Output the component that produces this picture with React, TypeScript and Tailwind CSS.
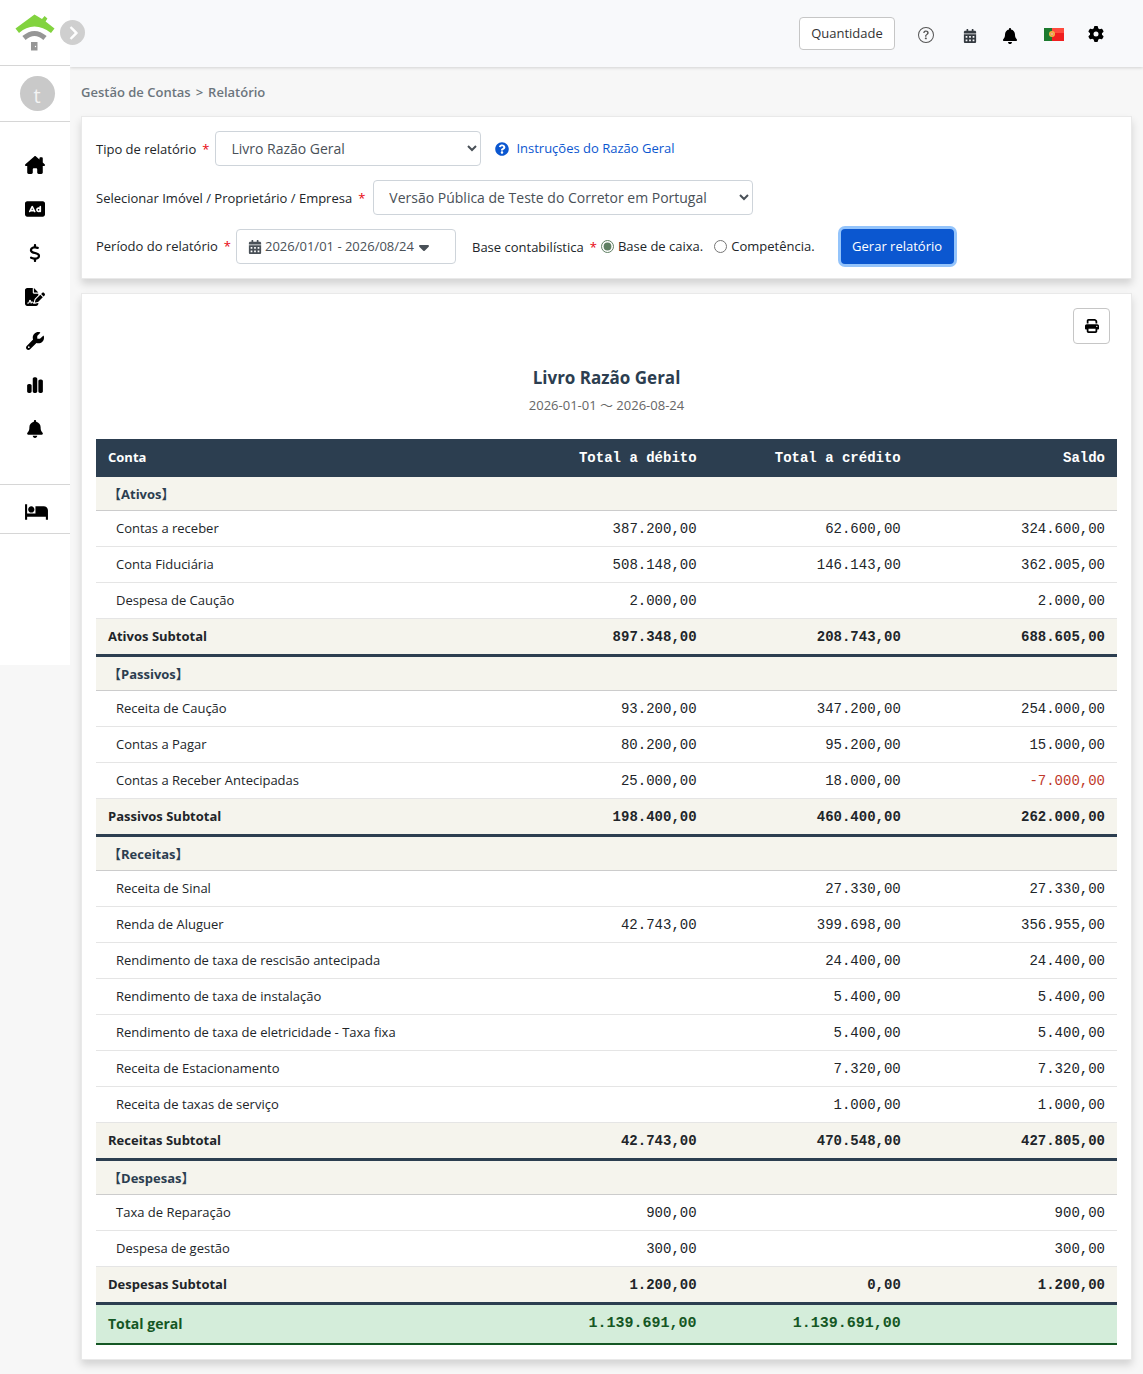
import React, { useState } from 'react';
import { FaCalendarAlt, FaQuestionCircle } from 'react-icons/fa';
import {
  FaBell,
  FaCaretDown,
  FaChartSimple,
  FaChevronRight,
  FaDollarSign,
  FaFileSignature,
  FaGear,
  FaHouseChimney,
  FaPrint,
  FaRectangleAd,
  FaWrench,
} from 'react-icons/fa6';
import { MdHotel } from 'react-icons/md';
import { BsQuestionCircle } from 'react-icons/bs';

interface Account {
  name: string;
  debit: string;
  credit: string;
  balance: string;
}

interface Section {
  title: string;
  accounts: Account[];
  total: Omit<Account, 'name'>;
}

const sections: Section[] = [
  {
    title: 'Ativos',
    accounts: [
      { name: 'Contas a receber', debit: '387.200,00', credit: '62.600,00', balance: '324.600,00' },
      { name: 'Conta Fiduciária', debit: '508.148,00', credit: '146.143,00', balance: '362.005,00' },
      { name: 'Despesa de Caução', debit: '2.000,00', credit: '', balance: '2.000,00' },
    ],
    total: { debit: '897.348,00', credit: '208.743,00', balance: '688.605,00' },
  },
  {
    title: 'Passivos',
    accounts: [
      { name: 'Receita de Caução', debit: '93.200,00', credit: '347.200,00', balance: '254.000,00' },
      { name: 'Contas a Pagar', debit: '80.200,00', credit: '95.200,00', balance: '15.000,00' },
      { name: 'Contas a Receber Antecipadas', debit: '25.000,00', credit: '18.000,00', balance: '-7.000,00' },
    ],
    total: { debit: '198.400,00', credit: '460.400,00', balance: '262.000,00' },
  },
  {
    title: 'Receitas',
    accounts: [
      { name: 'Receita de Sinal', debit: '', credit: '27.330,00', balance: '27.330,00' },
      { name: 'Renda de Aluguer', debit: '42.743,00', credit: '399.698,00', balance: '356.955,00' },
      { name: 'Rendimento de taxa de rescisão antecipada', debit: '', credit: '24.400,00', balance: '24.400,00' },
      { name: 'Rendimento de taxa de instalação', debit: '', credit: '5.400,00', balance: '5.400,00' },
      { name: 'Rendimento de taxa de eletricidade - Taxa fixa', debit: '', credit: '5.400,00', balance: '5.400,00' },
      { name: 'Receita de Estacionamento', debit: '', credit: '7.320,00', balance: '7.320,00' },
      { name: 'Receita de taxas de serviço', debit: '', credit: '1.000,00', balance: '1.000,00' },
    ],
    total: { debit: '42.743,00', credit: '470.548,00', balance: '427.805,00' },
  },
  {
    title: 'Despesas',
    accounts: [
      { name: 'Taxa de Reparação', debit: '900,00', credit: '', balance: '900,00' },
      { name: 'Despesa de gestão', debit: '300,00', credit: '', balance: '300,00' },
    ],
    total: { debit: '1.200,00', credit: '0,00', balance: '1.200,00' },
  },
];

const menu = [
  { label: 'Início', Icon: FaHouseChimney, size: 20 },
  { label: 'Anúncios', Icon: FaRectangleAd, size: 20 },
  { label: 'Contas', Icon: FaDollarSign, size: 18 },
  { label: 'Contratos', Icon: FaFileSignature, size: 20 },
  { label: 'Reparações', Icon: FaWrench, size: 18 },
  { label: 'Relatórios', Icon: FaChartSimple, size: 18 },
  { label: 'Notificações', Icon: FaBell, size: 18 },
];

const mono = "px-3 text-right font-['Liberation_Mono',monospace]";
const card = 'border border-[#e9e9e9] bg-white px-[14px] py-[14px] shadow-[0_5px_8px_rgba(0,0,0,0.15)]';
const select = 'h-[35px] rounded border border-[#ced4da] bg-white pl-[11px] text-sm text-[#495057]';

function Logo() {
  return (
    <svg width="40" height="38" viewBox="0 0 40 38" aria-hidden="true">
      <path d="M19.5 0.5 L27 5 L29.6 2 L32.4 4.4 L30.6 7.4 L39.5 14.5 L36 19 Q28 12.5 19.5 12.5 Q11 12.5 4 19 L0.5 14.5 Z" fill="#82d33f" />
      <path d="M9 24 Q19.5 15 30 24" fill="none" stroke="#969696" strokeWidth="5" />
      <path d="M16 28 H22.5 V36.5 H16 Z" fill="#969696" />
      <circle cx="20.5" cy="32.5" r="0.7" fill="#fff" />
    </svg>
  );
}

function Flag() {
  return (
    <svg width="20" height="13" viewBox="0 0 20 13" aria-hidden="true">
      <rect width="8" height="13" fill="#1d7a2e" />
      <rect x="8" width="12" height="13" fill="#f01f1f" />
      <rect x="8" width="12" height="5" fill="#ff4a3d" />
      <circle cx="8" cy="6" r="3" fill="#f2b544" />
      <circle cx="8" cy="6" r="1.5" fill="#e8794a" />
      <circle cx="8" cy="6" r="0.7" fill="#fff" />
    </svg>
  );
}

function Required() {
  return <span className="ml-[6px] text-red-600">*</span>;
}

function Sidebar() {
  return (
    <aside className="relative z-10 h-[665px] w-[70px] shrink-0 bg-white">
      <div className="flex h-[66px] justify-center border-b border-[#d6d6d6] pt-[14px]">
        <Logo />
      </div>
      <button aria-label="Expandir menu" className="absolute left-[60px] top-5 flex h-[25px] w-[25px] items-center justify-center rounded-full bg-[#cfcfcf] text-white">
        <FaChevronRight size={14} stroke="currentColor" strokeWidth={32} />
      </button>
      <div className="flex h-14 items-center justify-center border-b border-[#d6d6d6] pl-1">
        <span className="flex h-[35px] w-[35px] items-center justify-center rounded-full bg-[#c9c9c9] pt-1 text-xl leading-5 text-[#f4f4f4]">t</span>
      </div>
      <nav className="flex h-[363px] flex-col items-center border-b border-[#d6d6d6] pt-[21px] text-black">
        {menu.map(({ label, Icon, size }) => (
          <a key={label} href="#" aria-label={label} className="flex h-11 w-full items-center justify-center">
            <Icon size={size} />
          </a>
        ))}
      </nav>
      <a href="#" aria-label="Alojamento" className="flex h-[49px] items-center justify-center border-b border-[#d6d6d6] pt-1 pl-[2px] text-black">
        <MdHotel size={25} />
      </a>
    </aside>
  );
}

function Header() {
  return (
    <header className="flex h-[67px] items-center justify-end bg-[#f8f9fb] pr-[39px] text-black shadow-[0_1px_3px_rgba(0,0,0,0.15)]">
      <button className="mr-[23px] h-[33px] w-24 rounded border border-[#c6c6c6] bg-white text-[13px] text-[#333]">Quantidade</button>
      <button aria-label="Ajuda" className="mr-[29px] pt-[3px] text-[#555]"><BsQuestionCircle size={16} /></button>
      <button aria-label="Calendário" className="mr-[25px] pt-[5px] text-[#343a40]"><FaCalendarAlt size={14} /></button>
      <button aria-label="Notificações" className="mr-[26px] pt-[5px]"><FaBell size={16} /></button>
      <button aria-label="Idioma" className="mr-6 pt-[2px]"><Flag /></button>
      <button aria-label="Definições"><FaGear size={16} /></button>
    </header>
  );
}

function Filters() {
  const [basis, setBasis] = useState('cash');

  return (
    <section className={`${card} flex flex-col gap-[14px] text-[13px] text-[#212529]`}>
      <div className="flex items-center">
        <label htmlFor="type" className="mr-[6px] pt-[2px]">Tipo de relatório<Required /></label>
        <select id="type" className={`${select} w-[266px]`}>
          <option>Livro Razão Geral</option>
        </select>
        <a href="#" className="ml-[14px] flex items-center gap-[7px] text-[#0b57d0]">
          <FaQuestionCircle size={14} />
          Instruções do Razão Geral
        </a>
      </div>
      <div className="flex items-center">
        <label htmlFor="owner" className="mr-2 pt-[2px]">Selecionar Imóvel / Proprietário / Empresa<Required /></label>
        <select id="owner" className={`${select} w-[380px]`}>
          <option>Versão Pública de Teste do Corretor em Portugal</option>
        </select>
      </div>
      <div className="flex items-center">
        <label htmlFor="period" className="mr-[5px]">Período do relatório<Required /></label>
        <button id="period" className="flex h-[35px] w-[220px] items-center rounded border border-[#ced4da] bg-white px-[11px] text-[13px] text-[#495057]">
          <FaCalendarAlt size={14} className="mr-[3px]" />
          2026/01/01 - 2026/08/24
          <FaCaretDown size={16} className="ml-[2px]" />
        </button>
        <fieldset className="ml-4 flex items-center">
          <legend className="float-left mr-1 pt-[2px]">Base contabilística<Required /></legend>
          <label className="mr-[11px] flex items-center gap-1">
            <input type="radio" name="basis" className="h-[13px] w-[13px] accent-[#5f7f63]" checked={basis === 'cash'} onChange={() => setBasis('cash')} />
            Base de caixa.
          </label>
          <label className="flex items-center gap-1">
            <input type="radio" name="basis" className="h-[13px] w-[13px] accent-[#5f7f63]" checked={basis === 'accrual'} onChange={() => setBasis('accrual')} />
            Competência.
          </label>
        </fieldset>
        <button className="ml-[26px] h-[35px] w-[113px] rounded bg-[#0b57d0] text-white ring-[3px] ring-[#94c4fb]">Gerar relatório</button>
      </div>
    </section>
  );
}

function Ledger() {
  return (
    <table className="mt-6 w-full table-fixed border-separate border-spacing-0 text-[13px] text-[#212529]">
      <thead>
        <tr className="h-[38px] bg-[#2c3e50] text-white">
          <th className="w-2/5 px-3 text-left">Conta</th>
          <th className={`${mono} w-1/5 text-sm`}>Total a débito</th>
          <th className={`${mono} w-1/5 text-sm`}>Total a crédito</th>
          <th className={`${mono} w-1/5 text-sm`}>Saldo</th>
        </tr>
      </thead>
      {sections.map(({ title, accounts, total }) => (
        <tbody key={title}>
          <tr className="h-[34px] bg-[#f5f4ed]">
            <th colSpan={4} className="border-b border-[#ccc] px-3 pt-[2px] text-left text-[#2c3e50]">【{title}】</th>
          </tr>
          {accounts.map(row => (
            <tr key={row.name} className="h-9 [&>td]:border-b [&>td]:border-[#e5e5e5]">
              <td className="pl-5">{row.name}</td>
              <td className={`${mono} text-sm`}>{row.debit}</td>
              <td className={`${mono} text-sm`}>{row.credit}</td>
              <td className={`${mono} text-sm ${row.balance.startsWith('-') ? 'text-[#c0392b]' : ''}`}>{row.balance}</td>
            </tr>
          ))}
          <tr className="h-[38px] bg-[#f5f4ed] font-bold [&>td]:border-b-3 [&>td]:border-[#2c3e50]">
            <td className="px-3">{title} Subtotal</td>
            <td className={`${mono} text-sm`}>{total.debit}</td>
            <td className={`${mono} text-sm`}>{total.credit}</td>
            <td className={`${mono} text-sm`}>{total.balance}</td>
          </tr>
        </tbody>
      ))}
      <tfoot>
        <tr className="h-10 bg-[#d4edda] text-[#155724] [&>td]:border-b-2 [&>td]:border-[#155724]">
          <td className="px-3 text-sm font-bold">Total geral</td>
          <td className={`${mono} text-[15px] font-bold`}>1.139.691,00</td>
          <td className={`${mono} text-[15px] font-bold`}>1.139.691,00</td>
          <td></td>
        </tr>
      </tfoot>
    </table>
  );
}

function App() {
  return (
    <div className="flex min-h-screen bg-[#f7f7f7] font-['Open_Sans','Noto_Sans_CJK_JP',sans-serif]">
      <Sidebar />
      <div className="min-w-0 flex-1">
        <Header />
        <main className="px-[11px] pb-[14px]">
          <nav className="flex h-[49px] items-center gap-[5px] pt-[2px] text-[13px] font-semibold text-[#6c757d]">
            <span>Gestão de Contas</span>
            <span>&gt;</span>
            <span>Relatório</span>
          </nav>
          <Filters />
          <section className={`${card} mt-[14px]`}>
            <div className="flex justify-end pr-[7px]">
              <button aria-label="Imprimir" className="flex h-9 w-[37px] items-center justify-center rounded border border-[#c6c6c6] bg-white text-black">
                <FaPrint size={14} />
              </button>
            </div>
            <div className="mt-5 text-center">
              <h1 className="text-[17px] leading-7 font-bold text-[#2c3e50]">Livro Razão Geral</h1>
              <p className="mt-[3px] text-[13px] leading-5 text-[#666]">2026-01-01 ～ 2026-08-24</p>
            </div>
            <Ledger />
          </section>
        </main>
      </div>
    </div>
  );
}

export default App;
